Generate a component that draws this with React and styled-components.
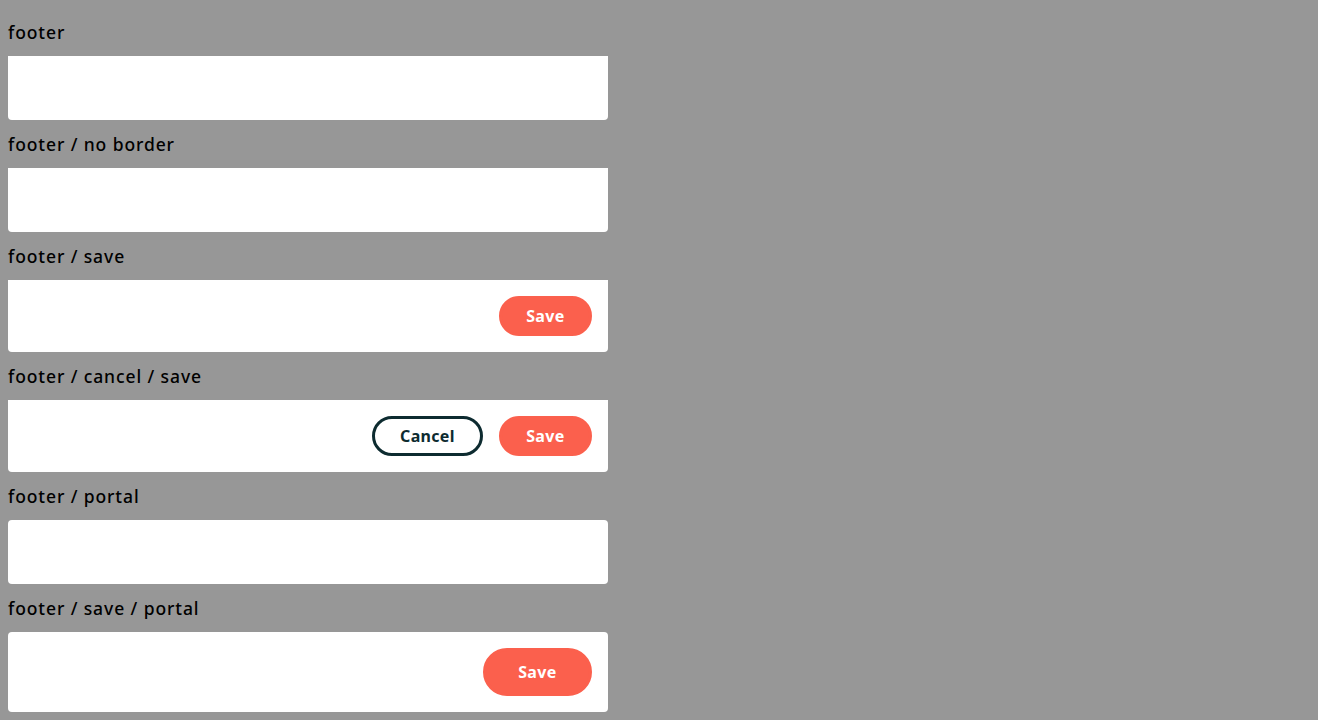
import styled, { createGlobalStyle } from 'styled-components';

const GlobalStyle = createGlobalStyle`
  html, body {
    margin: 0;
    background: #979797;
  }
  body {
    padding: 8px;
    font-family: "Noto Sans", "Open Sans", sans-serif;
  }
`;

const Page = styled.div`
  width: 600px;
  display: flex;
  flex-direction: column;
`;

const Label = styled.div`
  height: 48px;
  line-height: 48px;
  font-size: 17.5px;
  font-weight: 500;
  letter-spacing: 0.9px;
  color: #000;
`;

const Footer = styled.div`
  box-sizing: border-box;
  background: #fff;
  min-height: 64px;
  padding: 16px;
  display: flex;
  justify-content: flex-end;
  align-items: center;
  gap: 16px;
  border-radius: ${props => (props.portal ? '4px' : '0 0 4px 4px')};
`;

const Button = styled.button`
  box-sizing: border-box;
  height: ${props => (props.large ? 48 : 40)}px;
  padding: 0 ${props => (props.large ? 32.5 : props.outline ? 25 : 24.5)}px;
  border-radius: 24px;
  font-family: "Noto Sans", "Open Sans", sans-serif;
  font-size: 16px;
  font-weight: 700;
  letter-spacing: 0.3px;
  cursor: pointer;
  border: 3px solid ${props => (props.outline ? '#0d2b30' : '#fb604d')};
  background: ${props => (props.outline ? '#fff' : '#fb604d')};
  color: ${props => (props.outline ? '#0d2b30' : '#fff')};
`;

const examples = [
  { label: 'footer' },
  { label: 'footer / no border' },
  { label: 'footer / save', save: true },
  { label: 'footer / cancel / save', save: true, cancel: true },
  { label: 'footer / portal', portal: true },
  { label: 'footer / save / portal', save: true, portal: true },
];

const App = () => (
  <>
    <GlobalStyle />
    <Page>
      {examples.map(ex => (
        <section key={ex.label}>
          <Label>{ex.label}</Label>
          <Footer portal={ex.portal}>
            {ex.cancel && <Button outline>Cancel</Button>}
            {ex.save && <Button large={ex.portal}>Save</Button>}
          </Footer>
        </section>
      ))}
    </Page>
  </>
);

export default App;
